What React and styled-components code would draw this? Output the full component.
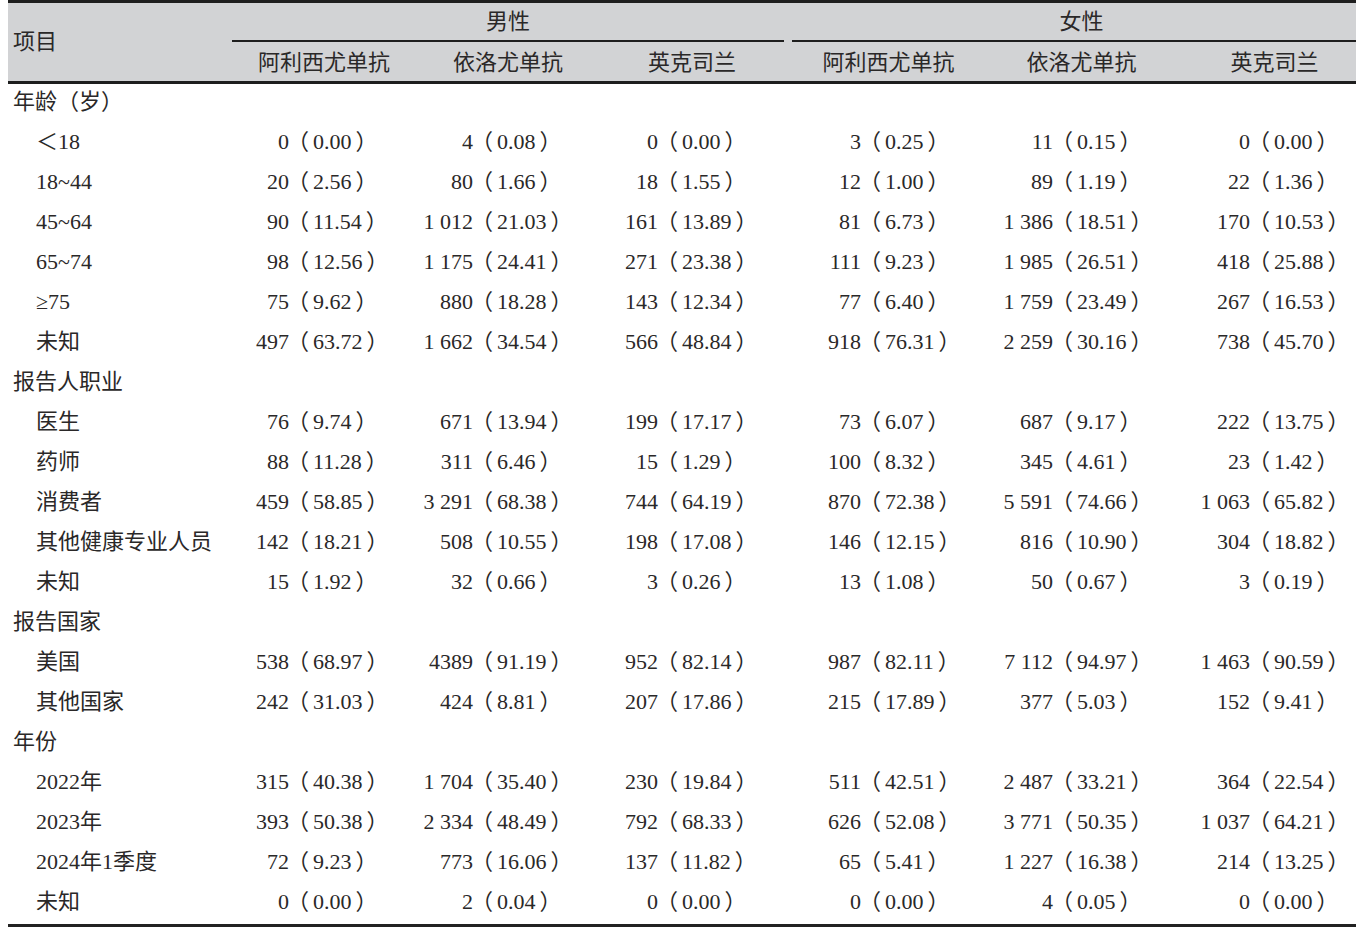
import React from "react";
import styled, { createGlobalStyle } from "styled-components";

const GlobalStyle = createGlobalStyle`
  html, body {
    margin: 0;
    padding: 0;
    background: #fff;
    overflow: hidden;
  }
  body {
    font-family: "Liberation Serif", "Noto Sans CJK SC", serif;
    color: #2a2828;
  }
`;

const COLS = "224px 184px 184px 184px 8px 193px 193px 193px";

const male = ["阿利西尤单抗", "依洛尤单抗", "英克司兰"];
const female = ["阿利西尤单抗", "依洛尤单抗", "英克司兰"];

const rows = [
  { section: "年龄（岁）" },
  { label: "＜18", v: ["0|0.00", "4|0.08", "0|0.00", "3|0.25", "11|0.15", "0|0.00"] },
  { label: "18~44", v: ["20|2.56", "80|1.66", "18|1.55", "12|1.00", "89|1.19", "22|1.36"] },
  { label: "45~64", v: ["90|11.54", "1 012|21.03", "161|13.89", "81|6.73", "1 386|18.51", "170|10.53"] },
  { label: "65~74", v: ["98|12.56", "1 175|24.41", "271|23.38", "111|9.23", "1 985|26.51", "418|25.88"] },
  { label: "≥75", v: ["75|9.62", "880|18.28", "143|12.34", "77|6.40", "1 759|23.49", "267|16.53"] },
  { label: "未知", v: ["497|63.72", "1 662|34.54", "566|48.84", "918|76.31", "2 259|30.16", "738|45.70"] },
  { section: "报告人职业" },
  { label: "医生", v: ["76|9.74", "671|13.94", "199|17.17", "73|6.07", "687|9.17", "222|13.75"] },
  { label: "药师", v: ["88|11.28", "311|6.46", "15|1.29", "100|8.32", "345|4.61", "23|1.42"] },
  { label: "消费者", v: ["459|58.85", "3 291|68.38", "744|64.19", "870|72.38", "5 591|74.66", "1 063|65.82"] },
  { label: "其他健康专业人员", v: ["142|18.21", "508|10.55", "198|17.08", "146|12.15", "816|10.90", "304|18.82"] },
  { label: "未知", v: ["15|1.92", "32|0.66", "3|0.26", "13|1.08", "50|0.67", "3|0.19"] },
  { section: "报告国家" },
  { label: "美国", v: ["538|68.97", "4389|91.19", "952|82.14", "987|82.11", "7 112|94.97", "1 463|90.59"] },
  { label: "其他国家", v: ["242|31.03", "424|8.81", "207|17.86", "215|17.89", "377|5.03", "152|9.41"] },
  { section: "年份" },
  { label: "2022年", v: ["315|40.38", "1 704|35.40", "230|19.84", "511|42.51", "2 487|33.21", "364|22.54"] },
  { label: "2023年", v: ["393|50.38", "2 334|48.49", "792|68.33", "626|52.08", "3 771|50.35", "1 037|64.21"] },
  { label: "2024年1季度", v: ["72|9.23", "773|16.06", "137|11.82", "65|5.41", "1 227|16.38", "214|13.25"] },
  { label: "未知", v: ["0|0.00", "2|0.04", "0|0.00", "0|0.00", "4|0.05", "0|0.00"] },
];

const Table = styled.div`
  width: 1363px;
  margin-left: 8px;
  font-size: 22px;
  line-height: 1;
  border-bottom: 3px solid #222;
`;

const Head = styled.div`
  display: grid;
  grid-template-columns: ${COLS};
  grid-template-rows: 39px 39px;
  background: #d2d3d5;
  border-top: 3px solid #1e1e1e;
  border-bottom: 3px solid #1e1e1e;
`;

const Corner = styled.div`
  grid-row: 1 / span 2;
  grid-column: 1;
  display: flex;
  align-items: center;
  padding-left: 5px;
`;

const Group = styled.div`
  grid-row: 1;
  grid-column: ${(p) => p.$col};
  display: flex;
  align-items: center;
  justify-content: center;
  box-sizing: border-box;
  border-bottom: 2px solid #1e1e1e;
`;

const SubHead = styled.div`
  grid-row: 2;
  grid-column: ${(p) => p.$col};
  display: flex;
  align-items: center;
  justify-content: center;
  padding-top: 2px;
`;

const Row = styled.div`
  display: grid;
  grid-template-columns: ${COLS};
  height: 40px;
  box-sizing: border-box;
  padding-bottom: 4px;
  align-items: center;
`;

const Label = styled.div`
  grid-column: 1;
  padding-left: ${(p) => (p.$section ? "5px" : "28px")};
  white-space: nowrap;
`;

const Cell = styled.div`
  grid-column: ${(p) => p.$col};
  display: flex;
  align-items: baseline;
  white-space: nowrap;
`;

const Num = styled.span`
  width: ${(p) => p.$split}px;
  text-align: right;
  flex-shrink: 0;
`;

const Open = styled.span`
  margin-left: -2px;
  margin-right: 4px;
`;

const Close = styled.span`
  padding-left: 4px;
`;

function Value({ raw, col, split }) {
  const [n, p] = raw.split("|");
  return (
    <Cell $col={col}>
      <Num $split={split}>{n}</Num>
      <Open>（</Open>
      <span>{p}</span>
      <Close>）</Close>
    </Cell>
  );
}

const valueCols = [2, 3, 4, 6, 7, 8];
const splits = [57, 57, 58, 69, 68, 72];

export default function App() {
  return (
    <>
      <GlobalStyle />
      <Table>
        <Head>
          <Corner>项目</Corner>
          <Group $col="2 / span 3">男性</Group>
          <Group $col="6 / span 3">女性</Group>
          {male.map((h, i) => (
            <SubHead key={"m" + i} $col={2 + i}>
              {h}
            </SubHead>
          ))}
          {female.map((h, i) => (
            <SubHead key={"f" + i} $col={6 + i}>
              {h}
            </SubHead>
          ))}
        </Head>
        {rows.map((r, i) =>
          r.section ? (
            <Row key={i}>
              <Label $section>{r.section}</Label>
            </Row>
          ) : (
            <Row key={i}>
              <Label>{r.label}</Label>
              {r.v.map((raw, j) => (
                <Value key={j} raw={raw} col={valueCols[j]} split={splits[j]} />
              ))}
            </Row>
          )
        )}
      </Table>
    </>
  );
}
